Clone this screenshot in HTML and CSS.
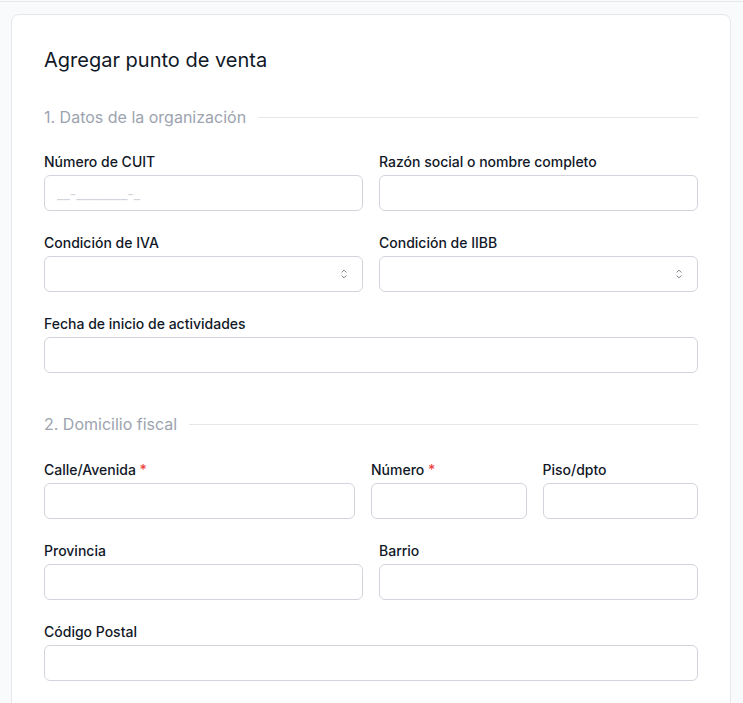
FILE: index.html
```html
<!DOCTYPE html>
<html>
<head>
    <meta charset="utf-8">
    <title>Agregar punto de venta</title>
    <link rel="stylesheet" href="styles.css">
</head>
<body>
    <div class="topbar"></div>
    <div class="page">
        <div class="card">
            <h1>Agregar punto de venta</h1>

            <div class="section-title"><span>1. Datos de la organización</span></div>

            <div class="grid two">
                <div class="field">
                    <label>Número de CUIT</label>
                    <input type="text" placeholder="__-________-_">
                </div>
                <div class="field">
                    <label>Razón social o nombre completo</label>
                    <input type="text">
                </div>
                <div class="field">
                    <label>Condición de IVA</label>
                    <div class="select">
                        <svg viewBox="0 0 20 20" width="14" height="14" fill="none" stroke="#6b7280" stroke-width="1.3" stroke-linecap="round" stroke-linejoin="round"><path d="M7 7.5l3-3 3 3M7 12.5l3 3 3-3"/></svg>
                    </div>
                </div>
                <div class="field">
                    <label>Condición de IIBB</label>
                    <div class="select">
                        <svg viewBox="0 0 20 20" width="14" height="14" fill="none" stroke="#6b7280" stroke-width="1.3" stroke-linecap="round" stroke-linejoin="round"><path d="M7 7.5l3-3 3 3M7 12.5l3 3 3-3"/></svg>
                    </div>
                </div>
                <div class="field wide">
                    <label>Fecha de inicio de actividades</label>
                    <input type="text">
                </div>
            </div>

            <div class="section-title second"><span>2. Domicilio fiscal</span></div>

            <div class="grid three">
                <div class="field">
                    <label>Calle/Avenida <span class="req">*</span></label>
                    <input type="text">
                </div>
                <div class="field">
                    <label>Número <span class="req">*</span></label>
                    <input type="text">
                </div>
                <div class="field">
                    <label>Piso/dpto</label>
                    <input type="text">
                </div>
            </div>
            <div class="grid two next">
                <div class="field">
                    <label>Provincia</label>
                    <input type="text">
                </div>
                <div class="field">
                    <label>Barrio</label>
                    <input type="text">
                </div>
                <div class="field wide">
                    <label>Código Postal</label>
                    <input type="text">
                </div>
            </div>
        </div>
    </div>
</body>
</html>
```

FILE: styles.css
```css
body {
    margin: 0;
    font-family: Inter, "Noto Sans", sans-serif;
    background: #f9fafb;
    color: #111827;
}
.topbar {
    height: 1px;
    background: #f9fafb;
    border-bottom: 1px solid #e5e7eb;
}
.page {
    padding: 12px 12px 40px 11px;
}
.card {
    background: white;
    border: 1px solid #e5e7eb;
    border-radius: 8px;
    padding: 31px 32px 40px;
}
h1 {
    margin: 0;
    font-size: 20px;
    line-height: 28px;
    font-weight: 400;
    color: #111827;
}
.section-title {
    display: flex;
    align-items: center;
    gap: 12px;
    margin: 31px 0 23px;
    font-size: 16px;
    line-height: 24px;
    color: #9ca3af;
}
.section-title::after {
    content: "";
    flex: 1;
    height: 1px;
    background: #e5e7eb;
}
.section-title.second {
    margin: 39px 0 24px;
}
.grid {
    display: grid;
    column-gap: 16px;
    row-gap: 22px;
}
.grid.two {
    grid-template-columns: 1fr 1fr;
}
.grid.three {
    grid-template-columns: 2fr 1fr 1fr;
}
.grid.next {
    margin-top: 22px;
}
.field.wide {
    grid-column: 1 / -1;
}
.field label {
    display: block;
    font-size: 14px;
    line-height: 20px;
    font-weight: 500;
    color: #111827;
    margin-bottom: 3px;
}
.req {
    color: #ef4444;
}
.field input,
.select {
    display: block;
    box-sizing: border-box;
    width: 100%;
    height: 36px;
    border: 1px solid #d1d5db;
    border-radius: 6px;
    background: white;
    padding: 0 12px;
    font-family: inherit;
    font-size: 14px;
    color: #111827;
    outline: none;
}
.field input::placeholder {
    color: #d1d5db;
}
.select {
    display: flex;
    align-items: center;
    justify-content: flex-end;
    padding-right: 11px;
}
```
